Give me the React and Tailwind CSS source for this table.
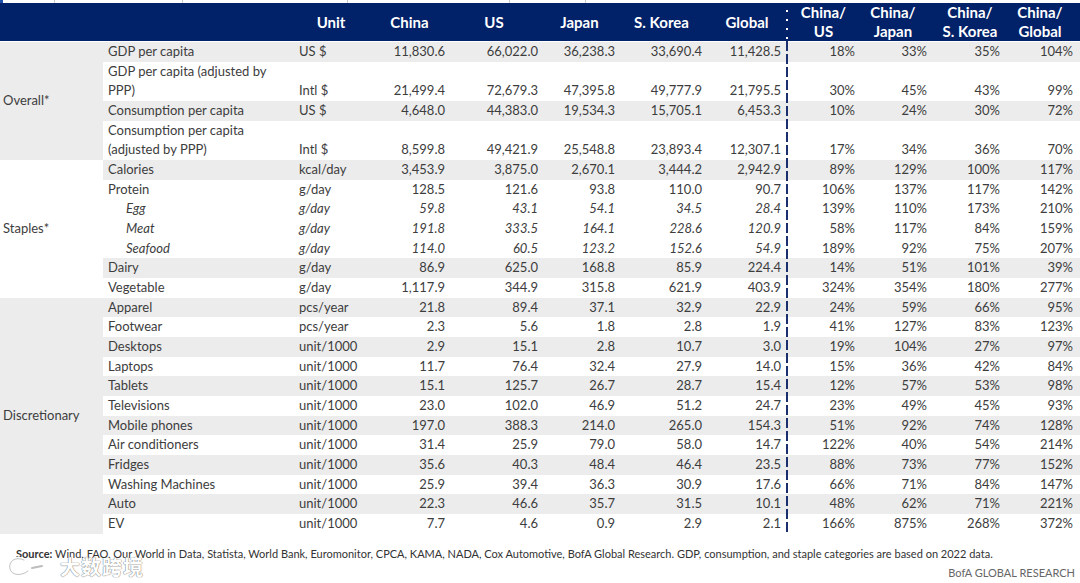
import React from "react";

const COLS =
  "grid grid-cols-[193px_76px_75px_94px_77px_87px_79px_6px_67px_72px_77px_74px]";

// pr for each numeric column, so the figures line up on the right
const NUM_PAD = ["pr-[2px]", "pr-[3px]", "pr-[3px]", "pr-[3px]", "pr-[3px]"];
const PCT_PAD = ["pr-[2px]", "pr-[2px]", "pr-[6px]", "pr-[7px]"];

const ROW_H = "h-[19.68px]";
const ROW_H2 = "h-[39.36px]";

const GROUPS = [
  {
    name: "Overall*",
    shade: true,
    rows: [
      ["GDP per capita", "US $", ["11,830.6", "66,022.0", "36,238.3", "33,690.4", "11,428.5"], ["18%", "33%", "35%", "104%"], { gray: true }],
      [["GDP per capita (adjusted by", "PPP)"], "Intl $", ["21,499.4", "72,679.3", "47,395.8", "49,777.9", "21,795.5"], ["30%", "45%", "43%", "99%"], {}],
      ["Consumption per capita", "US $", ["4,648.0", "44,383.0", "19,534.3", "15,705.1", "6,453.3"], ["10%", "24%", "30%", "72%"], { gray: true }],
      [["Consumption per capita", "(adjusted by PPP)"], "Intl $", ["8,599.8", "49,421.9", "25,548.8", "23,893.4", "12,307.1"], ["17%", "34%", "36%", "70%"], {}],
    ],
  },
  {
    name: "Staples*",
    shade: false,
    rows: [
      ["Calories", "kcal/day", ["3,453.9", "3,875.0", "2,670.1", "3,444.2", "2,942.9"], ["89%", "129%", "100%", "117%"], { gray: true }],
      ["Protein", "g/day", ["128.5", "121.6", "93.8", "110.0", "90.7"], ["106%", "137%", "117%", "142%"], {}],
      ["Egg", "g/day", ["59.8", "43.1", "54.1", "34.5", "28.4"], ["139%", "110%", "173%", "210%"], { sub: true }],
      ["Meat", "g/day", ["191.8", "333.5", "164.1", "228.6", "120.9"], ["58%", "117%", "84%", "159%"], { sub: true }],
      ["Seafood", "g/day", ["114.0", "60.5", "123.2", "152.6", "54.9"], ["189%", "92%", "75%", "207%"], { sub: true }],
      ["Dairy", "g/day", ["86.9", "625.0", "168.8", "85.9", "224.4"], ["14%", "51%", "101%", "39%"], { gray: true }],
      ["Vegetable", "g/day", ["1,117.9", "344.9", "315.8", "621.9", "403.9"], ["324%", "354%", "180%", "277%"], {}],
    ],
  },
  {
    name: "Discretionary",
    shade: true,
    rows: [
      ["Apparel", "pcs/year", ["21.8", "89.4", "37.1", "32.9", "22.9"], ["24%", "59%", "66%", "95%"]],
      ["Footwear", "pcs/year", ["2.3", "5.6", "1.8", "2.8", "1.9"], ["41%", "127%", "83%", "123%"]],
      ["Desktops", "unit/1000", ["2.9", "15.1", "2.8", "10.7", "3.0"], ["19%", "104%", "27%", "97%"]],
      ["Laptops", "unit/1000", ["11.7", "76.4", "32.4", "27.9", "14.0"], ["15%", "36%", "42%", "84%"]],
      ["Tablets", "unit/1000", ["15.1", "125.7", "26.7", "28.7", "15.4"], ["12%", "57%", "53%", "98%"]],
      ["Televisions", "unit/1000", ["23.0", "102.0", "46.9", "51.2", "24.7"], ["23%", "49%", "45%", "93%"]],
      ["Mobile phones", "unit/1000", ["197.0", "388.3", "214.0", "265.0", "154.3"], ["51%", "92%", "74%", "128%"]],
      ["Air conditioners", "unit/1000", ["31.4", "25.9", "79.0", "58.0", "14.7"], ["122%", "40%", "54%", "214%"]],
      ["Fridges", "unit/1000", ["35.6", "40.3", "48.4", "46.4", "23.5"], ["88%", "73%", "77%", "152%"]],
      ["Washing Machines", "unit/1000", ["25.9", "39.4", "36.3", "30.9", "17.6"], ["66%", "71%", "84%", "147%"]],
      ["Auto", "unit/1000", ["22.3", "46.6", "35.7", "31.5", "10.1"], ["48%", "62%", "71%", "221%"]],
      ["EV", "unit/1000", ["7.7", "4.6", "0.9", "2.9", "2.1"], ["166%", "875%", "268%", "372%"]],
    ].map((r, i) => [...r, { gray: i % 2 === 0 }]),
  },
];

function Row({ label, unit, nums, pcts, opts }) {
  const twoLine = Array.isArray(label);
  const h = twoLine ? ROW_H2 : ROW_H;
  const it = opts.sub ? "italic" : "";
  return (
    <div
      className={`${COLS} ${h} items-end leading-[19.68px] ${
        opts.gray ? "bg-[#ececec]" : "bg-white"
      }`}
    >
      <div className={`${opts.sub ? "pl-[23px]" : "pl-[5px]"} ${it} whitespace-nowrap`}>
        {twoLine ? (
          <>
            {label[0]}
            <br />
            {label[1]}
          </>
        ) : (
          label
        )}
      </div>
      <div className={`pl-[3px] ${it}`}>{unit}</div>
      {nums.map((n, i) => (
        <div key={i} className={`text-right ${NUM_PAD[i]} ${it}`}>
          {n}
        </div>
      ))}
      <div />
      {pcts.map((p, i) => (
        <div key={i} className={`text-right ${PCT_PAD[i]}`}>
          {p}
        </div>
      ))}
    </div>
  );
}

export default function App() {
  return (
    <div className="w-[1080px] h-[583px] bg-white overflow-hidden relative font-['Lato','Roboto',sans-serif] text-[13px] text-[#3d3d3d]">
      {/* cut-off row above */}
      <div className="h-[3px] flex">
        <div className="w-[3px] bg-[#1f4fa8]" />
        <div className="w-[52px] border-r border-[#c8c8c8]" />
        <div className="w-[128px] border-r border-[#c8c8c8]" />
        <div className="w-[165px] border-r border-[#c8c8c8]" />
        <div className="w-[162px] border-r border-[#c8c8c8]" />
        <div className="w-[76px] border-r border-[#c8c8c8]" />
      </div>

      {/* header */}
      <div className="h-[38px] bg-[#012169] text-white font-bold text-[15px] leading-[19px] grid grid-cols-[296px_76px_75px_94px_77px_87px_79px_6px_67px_72px_77px_74px] items-center">
        <div />
        <div className="text-center pr-[6px]">Unit</div>
        <div className="text-center">China</div>
        <div className="text-center">US</div>
        <div className="text-center">Japan</div>
        <div className="text-center">S. Korea</div>
        <div className="text-center pl-[5px]">Global</div>
        <div />
        <div className="text-center">
          China/
          <br />
          US
        </div>
        <div className="text-center">
          China/
          <br />
          Japan
        </div>
        <div className="text-center pl-[5px]">
          China/
          <br />
          S. Korea
        </div>
        <div className="text-center pr-[6px]">
          China/
          <br />
          Global
        </div>
      </div>

      {/* body */}
      <div className="pt-[1px]">
        {GROUPS.map((g) => (
          <div key={g.name} className="flex">
            <div
              className={`w-[103px] shrink-0 flex items-center pl-[3px] ${
                g.shade ? "bg-[#ececec]" : "bg-white"
              }`}
            >
              {g.name}
            </div>
            <div className="flex-1">
              {g.rows.map(([label, unit, nums, pcts, opts], i) => (
                <Row key={i} label={label} unit={unit} nums={nums} pcts={pcts} opts={opts} />
              ))}
            </div>
          </div>
        ))}
      </div>

      {/* dashed divider between values and ratios */}
      <div className="absolute left-[786px] top-[3px] w-[2px] h-[38px] bg-[repeating-linear-gradient(to_bottom,transparent_0px,transparent_7px,#ffffff_7px,#ffffff_9px)]" />
      <div className="absolute left-[786px] top-[41px] w-[2px] h-[491px] bg-[repeating-linear-gradient(to_bottom,#1b2f6e_0px,#1b2f6e_10px,transparent_10px,transparent_13px)]" />

      {/* footer */}
      <div className="pt-[13px] pl-[16px] text-[11px] leading-[14px] text-[#333]">
        <span className="font-bold">Source:</span> Wind, FAO, Our World in Data, Statista, World Bank,
        Euromonitor, CPCA, KAMA, NADA, Cox Automotive, BofA Global Research. GDP, consumption, and
        staple categories are based on 2022 data.
      </div>
      <div className="pt-[5px] pr-[5px] text-right text-[11px] leading-[14px] text-[#666]">
        BofA GLOBAL RESEARCH
      </div>

      {/* watermark */}
      <div className="absolute left-[6px] top-[555px] flex items-center gap-[14px] text-white">
        <svg width="40" height="24" viewBox="0 0 40 24" fill="none">
          <path
            d="M18 5 C10 1 2 6 4 14 C6 21 16 21 22 16"
            stroke="#ffffff"
            strokeWidth="3.5"
            strokeLinecap="round"
          />
          <path
            d="M18 5 C10 1 2 6 4 14 C6 21 16 21 22 16"
            stroke="#9a9a9a"
            strokeWidth="1"
            strokeLinecap="round"
            opacity="0.6"
          />
          <path d="M26 13 L36 11" stroke="#bdbdbd" strokeWidth="2" strokeLinecap="round" />
        </svg>
        <span className="font-['Noto_Sans_CJK_SC',sans-serif] text-[20px] leading-[22px] font-bold tracking-[1px] [text-shadow:0_0_1px_#777,0_0_1px_#777]">
          大数跨境
        </span>
      </div>
    </div>
  );
}
